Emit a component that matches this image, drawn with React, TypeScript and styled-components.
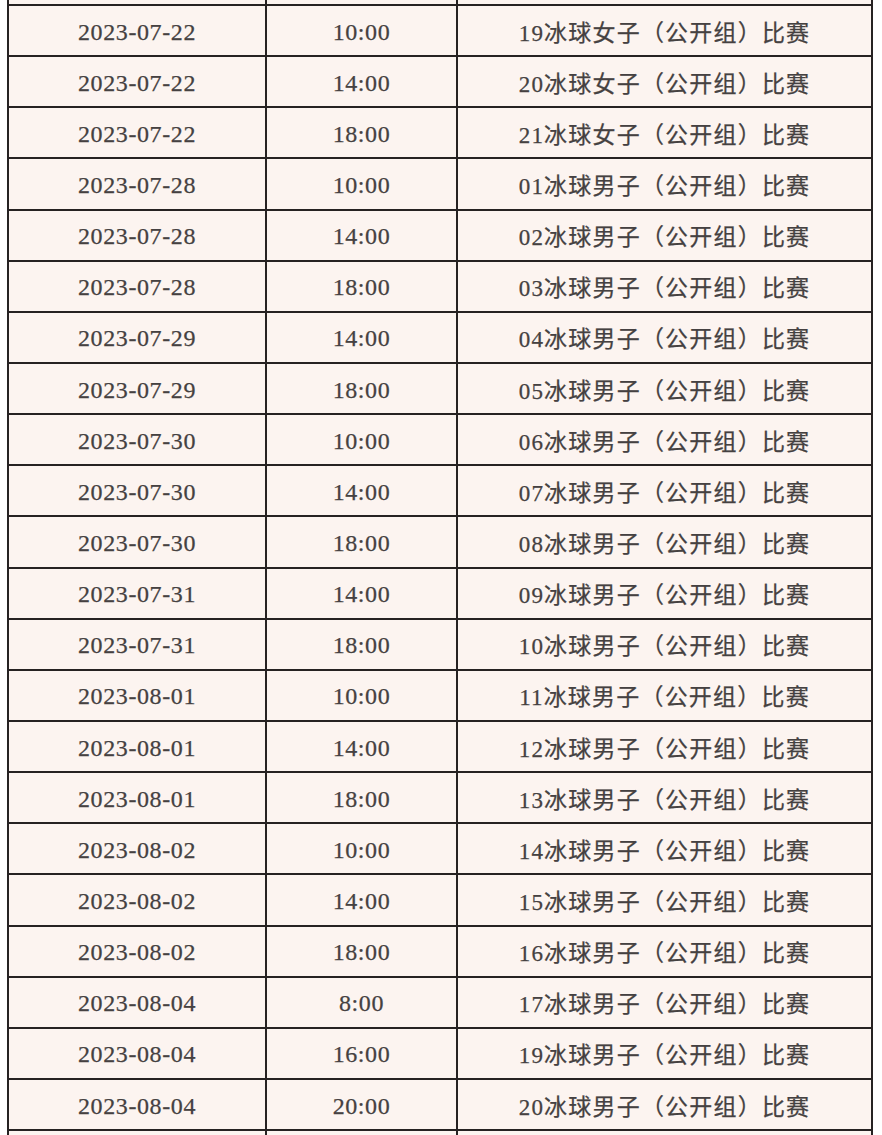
import styled, { createGlobalStyle } from 'styled-components'

type Match = { date: string; time: string; name: string }

const matches: Match[] = [
  { date: '2023-07-22', time: '10:00', name: '19冰球女子（公开组）比赛' },
  { date: '2023-07-22', time: '14:00', name: '20冰球女子（公开组）比赛' },
  { date: '2023-07-22', time: '18:00', name: '21冰球女子（公开组）比赛' },
  { date: '2023-07-28', time: '10:00', name: '01冰球男子（公开组）比赛' },
  { date: '2023-07-28', time: '14:00', name: '02冰球男子（公开组）比赛' },
  { date: '2023-07-28', time: '18:00', name: '03冰球男子（公开组）比赛' },
  { date: '2023-07-29', time: '14:00', name: '04冰球男子（公开组）比赛' },
  { date: '2023-07-29', time: '18:00', name: '05冰球男子（公开组）比赛' },
  { date: '2023-07-30', time: '10:00', name: '06冰球男子（公开组）比赛' },
  { date: '2023-07-30', time: '14:00', name: '07冰球男子（公开组）比赛' },
  { date: '2023-07-30', time: '18:00', name: '08冰球男子（公开组）比赛' },
  { date: '2023-07-31', time: '14:00', name: '09冰球男子（公开组）比赛' },
  { date: '2023-07-31', time: '18:00', name: '10冰球男子（公开组）比赛' },
  { date: '2023-08-01', time: '10:00', name: '11冰球男子（公开组）比赛' },
  { date: '2023-08-01', time: '14:00', name: '12冰球男子（公开组）比赛' },
  { date: '2023-08-01', time: '18:00', name: '13冰球男子（公开组）比赛' },
  { date: '2023-08-02', time: '10:00', name: '14冰球男子（公开组）比赛' },
  { date: '2023-08-02', time: '14:00', name: '15冰球男子（公开组）比赛' },
  { date: '2023-08-02', time: '18:00', name: '16冰球男子（公开组）比赛' },
  { date: '2023-08-04', time: '8:00', name: '17冰球男子（公开组）比赛' },
  { date: '2023-08-04', time: '16:00', name: '19冰球男子（公开组）比赛' },
  { date: '2023-08-04', time: '20:00', name: '20冰球男子（公开组）比赛' },
]

const GlobalStyle = createGlobalStyle`
  html, body {
    margin: 0;
    padding: 0;
    background: #ffffff;
  }
`

const Page = styled.div`
  width: 882px;
  height: 1135px;
  overflow: hidden;
  padding: 0 9px 0 7px;
  box-sizing: border-box;
`

const Table = styled.table`
  width: 100%;
  border-collapse: collapse;
  table-layout: fixed;
  background: #fcf4f0;
  font-family: "Liberation Serif", "Noto Sans CJK SC", serif;
  color: #454141;
  -webkit-text-stroke: 0.25px #454141;
`

const Cell = styled.td<{ $wide?: boolean }>`
  border: 2px solid #262222;
  height: 51.15px;
  padding: ${(p) => (p.$wide ? '0' : '3px 0 0')};
  box-sizing: border-box;
  text-align: center;
  vertical-align: middle;
  font-size: ${(p) => (p.$wide ? '23px' : '24px')};
  letter-spacing: ${(p) => (p.$wide ? '1.2px' : '0.6px')};
  white-space: nowrap;
`

const StubCell = styled.td`
  border-left: 2px solid #262222;
  border-right: 2px solid #262222;
  border-bottom: 2px solid #262222;
  height: 4px;
  padding: 0;
`

const App = () => {
  return (
    <>
      <GlobalStyle />
      <Page>
        <Table>
          <colgroup>
            <col style={{ width: '258px' }} />
            <col style={{ width: '191px' }} />
            <col />
          </colgroup>
          <tbody>
            <tr>
              <StubCell />
              <StubCell />
              <StubCell />
            </tr>
            {matches.map((m, i) => (
              <tr key={i}>
                <Cell>{m.date}</Cell>
                <Cell>{m.time}</Cell>
                <Cell $wide>{m.name}</Cell>
              </tr>
            ))}
            <tr>
              <Cell />
              <Cell />
              <Cell />
            </tr>
          </tbody>
        </Table>
      </Page>
    </>
  )
}

export default App
